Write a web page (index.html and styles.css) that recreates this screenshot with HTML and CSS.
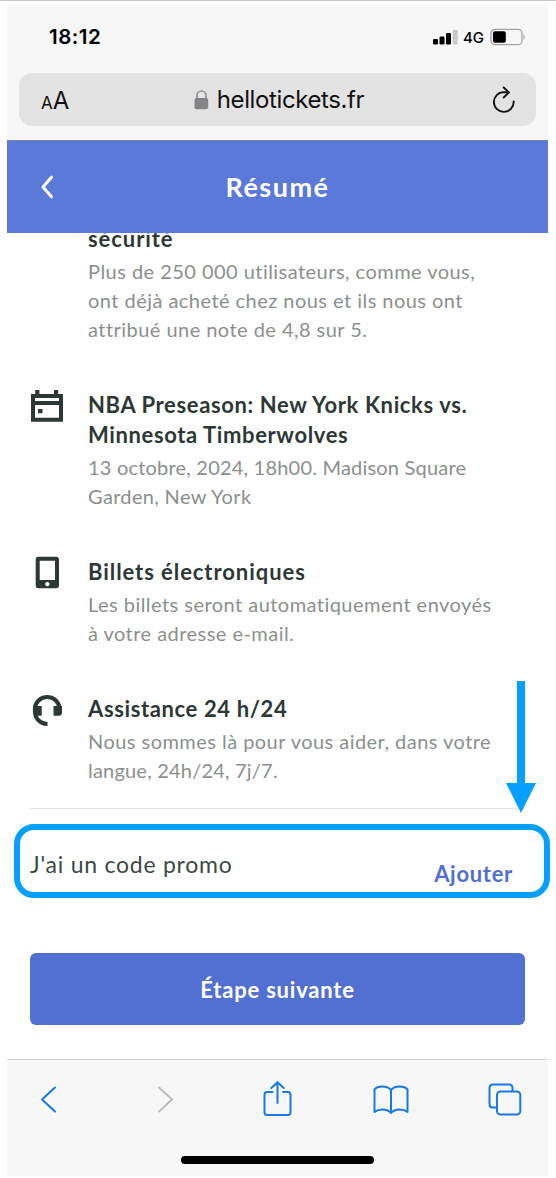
FILE: index.html
```html
<!DOCTYPE html>
<html lang="fr">
<head>
<meta charset="utf-8">
<title>Résumé</title>
<link rel="stylesheet" href="styles.css">
</head>
<body>
<div class="phone">
  <div class="status">
    <span class="time">18:12</span>
    <div class="status-right">
      <svg class="signal" width="25" height="16" viewBox="0 0 25 16"><rect x="0" y="10" width="5" height="5.500" rx="1.200"/><rect x="6.500" y="7.500" width="5" height="8" rx="1.200"/><rect x="13" y="4" width="5" height="11.500" rx="1.200"/><rect x="19.700" y="1" width="5" height="14.500" rx="1.200" fill="#c9c9c9"/></svg>
      <span class="network">4G</span>
      <svg class="battery" width="36" height="18" viewBox="0 0 36 18"><rect x="1" y="1.300" width="31" height="15.400" rx="4" fill="none" stroke="#a2a2a2" stroke-width="1.300"/><rect x="3" y="3.300" width="12.800" height="11.400" rx="2" fill="#000"/><path d="M33.500 6 Q36 9 33.500 12Z" fill="#a2a2a2"/></svg>
    </div>
  </div>
  <div class="url-bar">
    <span class="text-size"><span class="small-a">A</span>A</span>
    <div class="address">
      <svg width="15" height="20" viewBox="0 0 15 20"><path d="M3 10V5.500a4.500 4.500 0 0 1 9 0V10" fill="none" stroke="#929295" stroke-width="1.700"/><rect x=".5" y="8" width="13.700" height="11.300" rx="2" fill="#858587"/></svg>
      <span class="domain">hellotickets.fr</span>
    </div>
    <svg class="reload" width="24" height="28" viewBox="0 0 24 28"><g fill="none" stroke="#111" stroke-width="1.900" stroke-linecap="round" stroke-linejoin="round"><path d="M21.700 15.500A9.900 9.900 0 1 1 11.800 6.100L16.500 6.300"/><path d="M11.700 1.500L16.900 6.400L11.700 11.500"/></g></svg>
  </div>
  <header class="header">
    <svg class="back" width="14" height="24" viewBox="0 0 14 24"><path d="M11.500 2.200L3 12L11.500 21.800" fill="none" stroke="#fff" stroke-width="3" stroke-linecap="round" stroke-linejoin="round"/></svg>
    <h1>Résumé</h1>
  </header>
  <main class="content">
    <ul class="features">
      <li class="feature">
        <div class="icon"></div>
        <div><h2 class="wide">sécurité</h2>
        <p>Plus de 250 000 utilisateurs, comme vous,<br>ont déjà acheté chez nous et ils nous ont<br>attribué une note de 4,8 sur 5.</p></div>
      </li>
      <li class="feature">
        <div class="icon"><svg width="34" height="34" viewBox="0 0 34 34"><path fill="#2d3836" fill-rule="evenodd" d="M1 5H5.200V1H9.400V5H24V1H28.200V5H33V32.800H1ZM5 9V12H29V9ZM5 16V28.800H29V16ZM8 20H12.500V24.300H8Z"/></svg></div>
        <div><h2>NBA Preseason: New York Knicks vs.<br>Minnesota Timberwolves</h2>
        <p class="date"><span class="tight">13 octobre, 2024, 18h00. Madison Square</span><br>Garden, New York</p></div>
      </li>
      <li class="feature">
        <div class="icon"><svg width="34" height="34" viewBox="0 0 34 34"><path fill="#2d3836" fill-rule="evenodd" d="M8 .7H26Q29 .7 29 3.700V29.500Q29 32.300 26 32.300H8.500Q5.700 32.300 5.700 29.500V3.700Q5.700 .7 8 .7ZM9.700 4.800V24H25V4.800ZM17.300 25.900A2.200 2.200 0 1 0 17.310 25.900Z"/></svg></div>
        <div><h2 class="wide">Billets électroniques</h2>
        <p>Les billets seront automatiquement envoyés<br>à votre adresse e-mail.</p></div>
      </li>
      <li class="feature">
        <div class="icon"><svg width="34" height="34" viewBox="0 0 34 34"><path fill="none" stroke="#2d3836" stroke-width="4" d="M29.500 20V16.200A12.300 12.300 0 0 0 4.900 16.200V18C4.900 25.500 10 30.900 17.500 30.900"/><path fill="#2d3836" d="M3 13H11.700V22.700H4.500ZM23.500 13H32V19.500Q32 22.700 28.800 22.700H23.500Z"/></svg></div>
        <div><h2>Assistance 24 h/24</h2>
        <p>Nous sommes là pour vous aider, dans votre<br><span class="tight">langue, 24h/24, 7j/7.</span></p></div>
      </li>
    </ul>
    <div class="promo">
      <span class="promo-label">J'ai un code promo</span>
      <a class="add">Ajouter</a>
    </div>
    <button class="next">Étape suivante</button>
  </main>
  <nav class="toolbar">
    <svg width="541" height="50" viewBox="0 0 541 50" fill="none" stroke="#1878e5" stroke-width="2" stroke-linecap="round" stroke-linejoin="round">
      <path d="M48 17.500L35 29.500L48 41.500"/>
      <path d="M152 17.500L165 29.500L152 41.500" stroke="#bdbdbf"/>
      <path d="M265.500 22H260Q257.500 22 257.500 25V42.500Q257.500 45 260 45H281Q283.500 45 283.500 42.500V25Q283.500 22 281 22H276M270.500 33V13M264.300 18L270.500 12.300L276.700 18"/>
      <path d="M384 20C380 15.500 371 15.500 367.500 19.500V42C372 38.500 380 38.500 384 43C388 38.500 396 38.500 400.500 42V19.500C397 15.500 388 15.500 384 20V42.500"/>
      <rect x="490" y="21.500" width="23.300" height="23" rx="3.500"/><path d="M490 37.500H485.500Q482.500 37.500 482.500 34V18Q482.500 14.500 486 14.500H502Q505.500 14.500 505.500 18V21"/>
    </svg>
    <div class="home-bar"></div>
  </nav>
</div>
<svg class="arrow" width="30" height="133" viewBox="0 0 30 133"><path fill="#049fff" d="M11 0H19V102H30L15 132L0 102H11Z"/></svg>
<div class="highlight"></div>
</body>
</html>
```
FILE: styles.css
```css
* { box-sizing: border-box; }
body {
  margin: 0;
  height: 1178px;
  position: relative;
  overflow: hidden;
  background: #fff;
  border-top: 1px solid #c9c9c9;
  padding: 3px 8px 2px 7px;
  font-family: Lato, sans-serif;
}
.phone { height: 1172px; background: #f7f7f7; display: flex; flex-direction: column; }
.status {
  height: 69px;
  padding: 0 22px 4px 42px;
  display: flex;
  align-items: center;
  justify-content: space-between;
  font-family: Inter, sans-serif;
}
.time { font-size: 20.500px; font-weight: 600; letter-spacing: .5px; }
.status-right { display: flex; align-items: center; }
.network { font-size: 15px; font-weight: 500; margin: 1px 6px 0 5px; }
.url-bar {
  height: 53px;
  margin: 0 12px;
  padding: 0 20px 0 22px;
  border-radius: 13px;
  background: #e3e3e3;
  display: grid;
  grid-template-columns: 60px 1fr 60px;
  align-items: center;
  font-family: Inter, sans-serif;
  color: #111;
}
.text-size { font-size: 24px; padding-top: 2px; }
.small-a { font-size: 17px; }
.address { display: flex; align-items: center; justify-content: center; gap: 8px; padding-left: 1px; }
.domain { font-size: 24px; letter-spacing: -0.4px; }
.reload { justify-self: end; }
.header {
  height: 93px;
  margin-top: 14px;
  padding-bottom: 2px;
  flex: none;
  background: #5b79d9;
  border-top: 1px solid #7180b5;
  color: #fff;
  display: grid;
  grid-template-columns: 60px 1fr 60px;
  align-items: center;
}
.back { margin: 1px 0 0 33px; }
.header h1 { margin: 0; text-align: center; font-size: 27px; letter-spacing: 1.500px; }
.content { height: 826px; flex: none; overflow: hidden; background: #fff; padding: 0 23px; }
.features {
  list-style: none;
  margin: -8.800px 0 0;
  padding: 0 0 23.300px;
  border-bottom: 1px solid #e2e2e2;
  display: flex;
  flex-direction: column;
  gap: 46.400px;
}
.feature { display: grid; grid-template-columns: 58px 1fr; white-space: nowrap; }
.icon { margin-top: -.600px; }
.feature h2 { margin: 0; font-size: 22px; line-height: 30px; color: #2d3836; letter-spacing: .62px; }
.feature h2.wide { letter-spacing: .93px; }
.feature p { margin: 2.900px 0 0; font-size: 20px; line-height: 28.850px; color: #8b8f8e; letter-spacing: .46px; }
.feature p.date { letter-spacing: .33px; }
.feature .tight { letter-spacing: .2px; }
.promo {
  height: 144px;
  padding: 41px 12px 0 0;
  display: flex;
  align-items: flex-start;
  justify-content: space-between;
}
.promo-label { font-size: 23px; line-height: 28px; letter-spacing: .75px; color: #3e4846; }
.add { font-size: 22px; line-height: 28px; margin-top: 10px; font-weight: 700; letter-spacing: .7px; color: #526fd0; }
.next {
  display: block;
  width: 495px;
  height: 72px;
  padding: 2px 0 0;
  border: 0;
  border-radius: 6px;
  background: #526fd2;
  color: #fff;
  font: 700 22px Lato, sans-serif;
  letter-spacing: .8px;
}
.toolbar { flex: 1; border-top: 1px solid #d2d2d2; }
.toolbar svg { display: block; margin-top: 10px; }
.home-bar { width: 193px; height: 8px; margin: 36px 0 0 174px; border-radius: 4px; background: #000; }
.arrow { position: absolute; left: 506px; top: 680px; }
.highlight {
  position: absolute;
  left: 14px;
  top: 823px;
  width: 536px;
  height: 74px;
  border: 6px solid #049fff;
  border-radius: 20px;
}
```
